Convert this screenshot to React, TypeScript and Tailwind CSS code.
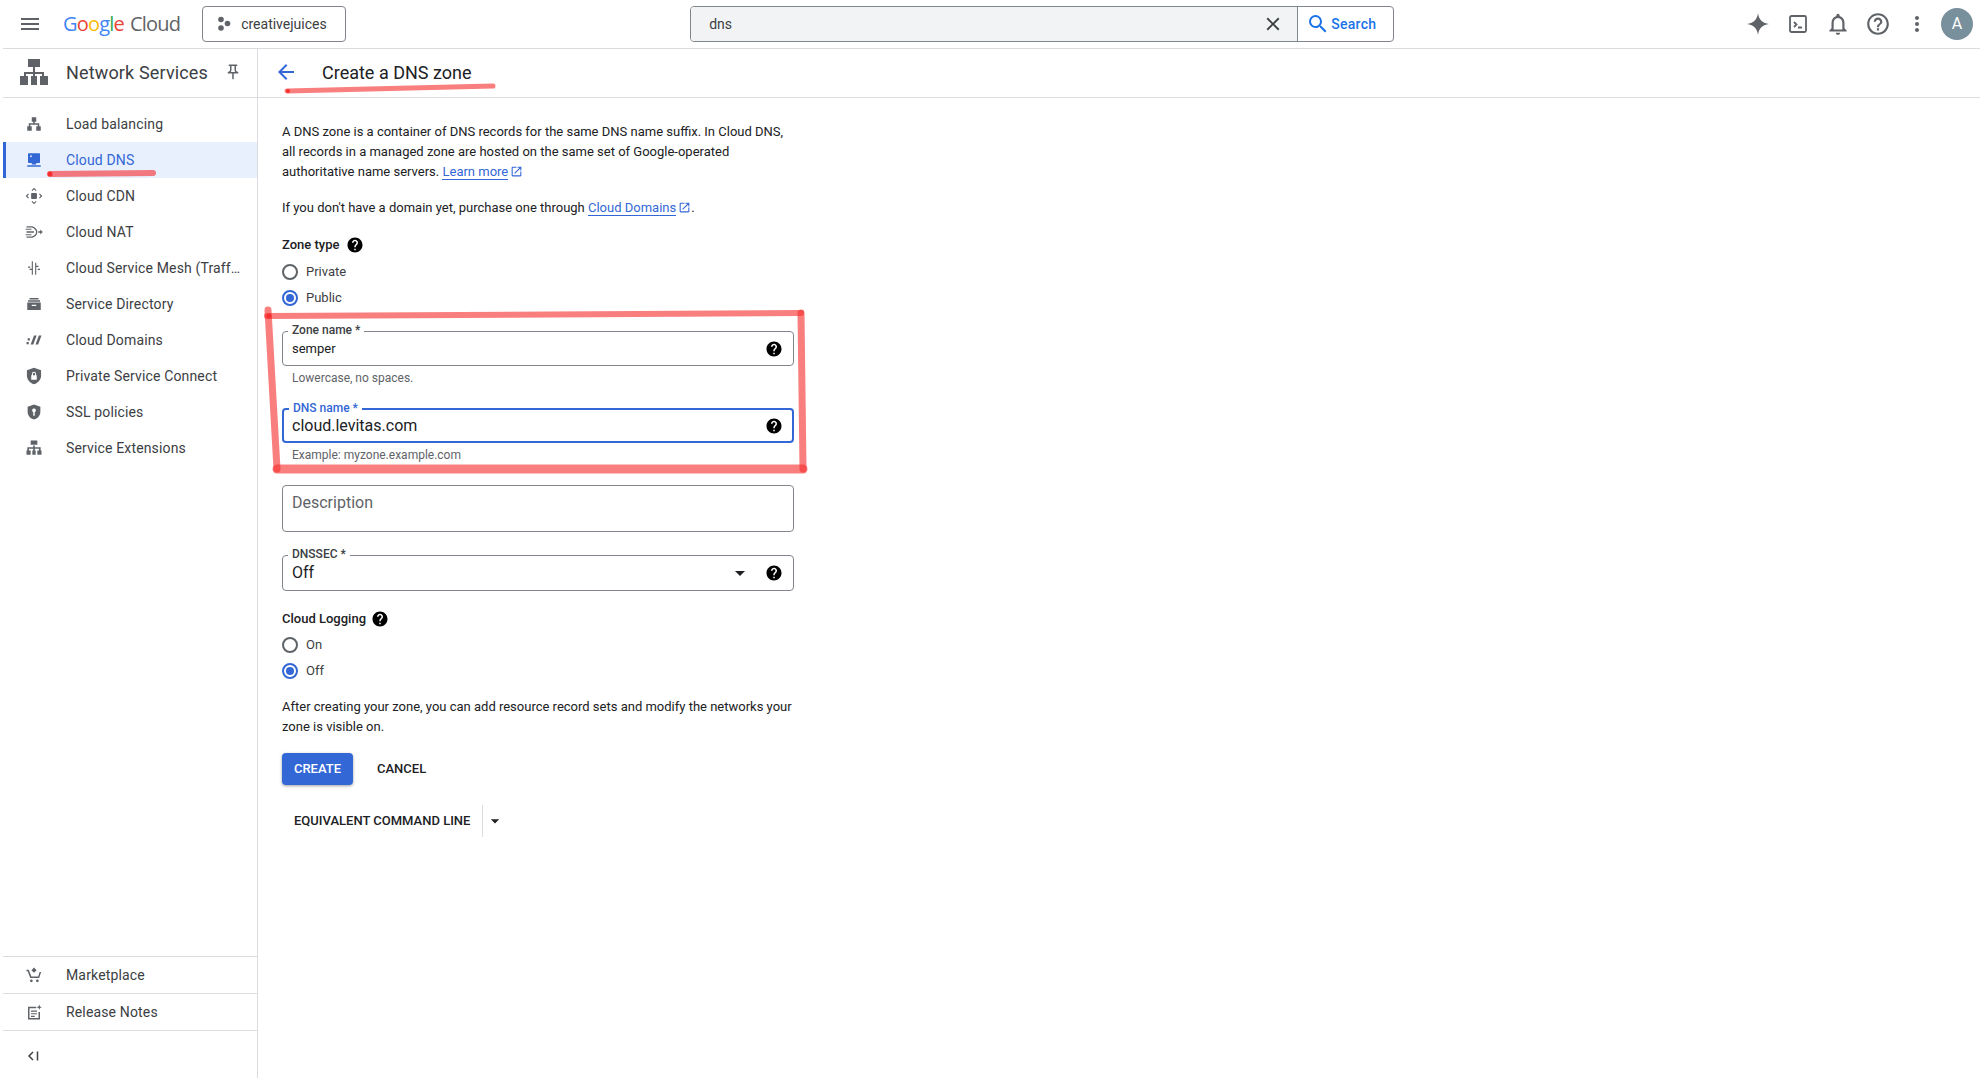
import React from "react";
import {
  MdMenu,
  MdArrowBack,
  MdHelp,
  MdClose,
  MdSearch,
  MdNotificationsNone,
  MdHelpOutline,
  MdMoreVert,
  MdOutlinePushPin,
  MdArrowDropDown,
  MdOutlineOpenInNew,
} from "react-icons/md";

const Svg = ({ children, size = 18 }: { children: React.ReactNode; size?: number }) => (
  <svg className="shrink-0" width={size} height={size} viewBox="0 0 24 24" fill="#5f6368">
    {children}
  </svg>
);

const navItems: { label: string; icon: React.ReactNode; active?: boolean }[] = [
  {
    label: "Load balancing",
    icon: (
      <Svg>
        <path d="M9 3h6v6h-2v2h6v4h2v6h-6v-6h2v-2h-10v2h2v6H3v-6h2v-4h6V9H9z" />
      </Svg>
    ),
  },
  {
    label: "Cloud DNS",
    active: true,
    icon: (
      <Svg>
        <path fill="#3367d6" d="M5 3h14a1 1 0 0 1 1 1v11a1 1 0 0 1-1 1h-4v2H9v-2H5a1 1 0 0 1-1-1V4a1 1 0 0 1 1-1zM3 19h18v2H3z" />
        <circle cx="8" cy="7" r="1.2" fill="#e8f0fe" />
      </Svg>
    ),
  },
  {
    label: "Cloud CDN",
    icon: (
      <Svg size={20}>
        <rect x="8.500" y="8.500" width="7" height="7" rx="1" />
        <path d="M9 5l3-3 3 3-1 1-2-2-2 2zM9 19l3 3 3-3-1-1-2 2-2-2zM5 9l-3 3 3 3 1-1-2-2 2-2zM19 9l3 3-3 3-1-1 2-2-2-2z" />
      </Svg>
    ),
  },
  {
    label: "Cloud NAT",
    icon: (
      <Svg size={20}>
        <path d="M3 5h7c4 1.500 6 4 6 7s-2 5.500-6 7H3v-1.500h6.500c3-1.200 5-3 5-5.500s-2-4.300-5-5.500H3zM3 11.200h9v1.600H3zM2 8h7v1.400H2zM2 14.600h7V16H2zM17 11.200h2.500V9l3 3-3 3v-2.200H17z" />
      </Svg>
    ),
  },
  {
    label: "Cloud Service Mesh (Traff…",
    icon: (
      <Svg>
        <path d="M9 3h1.500v18H9zM13.500 5H15v16h-1.500zM4 10h3v1.500H4zM6 13h3v1.500H6zM15 9h3v1.500h-3zM17 13h3v1.500h-3z" />
      </Svg>
    ),
  },
  {
    label: "Service Directory",
    icon: (
      <Svg>
        <path d="M6 4h12v2H6zM4 7h16v2H4zM3 10h18v10H3zM9 13v1.500h6V13z" />
      </Svg>
    ),
  },
  {
    label: "Cloud Domains",
    icon: (
      <Svg>
        <path d="M12 6h3.500L11 18H7.500zM18.500 6H22l-4.500 12H14zM3.500 9.500H6.500v3H3.500zM2 14.500h3v3H2z" />
      </Svg>
    ),
  },
  {
    label: "Private Service Connect",
    icon: (
      <Svg size={20}>
        <path
          fillRule="evenodd"
          d="M12 2l8.500 3v6.500c0 5-3.600 9-8.500 10.500-4.900-1.500-8.500-5.500-8.500-10.500V5zM9.500 11V9.500a2.500 2.500 0 0 1 5 0V11h.8v5.500H8.700V11zm1.200 0h2.600V9.500a1.300 1.300 0 0 0-2.600 0z"
        />
      </Svg>
    ),
  },
  {
    label: "SSL policies",
    icon: (
      <Svg>
        <path
          fillRule="evenodd"
          d="M12 2l8.500 3v6.500c0 5-3.600 9-8.500 10.500-4.900-1.500-8.500-5.500-8.500-10.500V5zM12 7.500a2.500 2.500 0 0 0-1 4.800V17h2v-4.700a2.500 2.500 0 0 0-1-4.800z"
        />
      </Svg>
    ),
  },
  {
    label: "Service Extensions",
    icon: (
      <Svg size={20}>
        <path d="M8 3h8v5H8zM11 9h2v2h7v4h1v5h-5v-5h2v-2h-5v2h1v5h-4v-5h1v-2H6v2h2v5H3v-5h1v-4h7z" />
      </Svg>
    ),
  },
];

function NavRow({ label, icon, active }: { label: string; icon: React.ReactNode; active?: boolean }) {
  return (
    <div
      className={`flex h-9 items-center text-[14px] tracking-[0.15px] ${
        active ? "border-l-[3px] border-[#3367d6] bg-[#e8f0fe] pl-[21px] text-[#3367d6]" : "pl-6 text-[#3c4043]"
      }`}
    >
      <span className="flex w-[14px] items-center justify-center">{icon}</span>
      <span className="ml-[25px] whitespace-nowrap">{label}</span>
    </div>
  );
}

function Radio({ label, checked }: { label: string; checked?: boolean }) {
  return (
    <div className="flex h-[26px] items-center text-[13px] text-[#3c4043]">
      <span
        className={`flex h-4 w-4 items-center justify-center rounded-full border-2 ${
          checked ? "border-[#3367d6]" : "border-[#5f6368]"
        }`}
      >
        {checked && <span className="h-2 w-2 rounded-full bg-[#3367d6]" />}
      </span>
      <span className="ml-2">{label}</span>
    </div>
  );
}

function FloatLabel({ text, focused }: { text: string; focused?: boolean }) {
  return (
    <span
      className={`absolute left-[5px] top-[-9px] bg-white px-[4px] text-[12px] font-medium leading-[14px] ${
        focused ? "text-[#3367d6]" : "text-[#3c4043]"
      }`}
    >
      {text}
    </span>
  );
}

function ExtLink({ text }: { text: string }) {
  return (
    <>
      <a className="border-b border-[#3367d6] text-[#3367d6]">{text}</a>
      <MdOutlineOpenInNew className="ml-[2px] inline-block align-[-2px] text-[#3367d6]" size={13} />
    </>
  );
}

export default function App() {
  return (
    <div className="relative h-[1090px] w-[1980px] overflow-hidden bg-white pl-[3px] font-['Roboto',sans-serif] text-[#202124]">
      {/* top bar */}
      <header className="flex h-[49px] items-center border-b border-[#dadce0]">
        <MdMenu className="ml-[15px] text-[#5f6368]" size={24} />
        <div className="ml-[21px] flex items-baseline font-['Open_Sans',sans-serif] text-[20px] tracking-[-0.8px]">
          <span className="text-[#4285f4]">G</span>
          <span className="text-[#ea4335]">o</span>
          <span className="text-[#fbbc04]">o</span>
          <span className="text-[#4285f4]">g</span>
          <span className="text-[#34a853]">l</span>
          <span className="text-[#ea4335]">e</span>
          <span className="ml-[6px] text-[#5f6368]">Cloud</span>
        </div>
        <div className="ml-[22px] flex h-[36px] w-[144px] items-center rounded-[4px] border border-[#80868b] pl-[13px] text-[14px] text-[#3c4043]">
          <svg width="16" height="16" viewBox="0 0 16 16" fill="#5f6368">
            <circle cx="5" cy="3.500" r="2.800" />
            <circle cx="11.500" cy="7.500" r="2.800" />
            <circle cx="5" cy="12" r="2.800" />
          </svg>
          <span className="ml-[9px]">creativejuices</span>
        </div>
        <div className="ml-[344px] flex h-[36px] w-[704px] items-center overflow-hidden rounded-[4px] border border-[#80868b]">
          <div className="flex h-full w-[606px] items-center justify-between bg-[#f1f3f4] pl-[18px] pr-[13px] text-[14px] text-[#3c4043]">
            <span>dns</span>
            <MdClose size={22} className="text-[#3c4043]" />
          </div>
          <div className="flex h-full flex-1 items-center border-l border-[#80868b] pl-[8px] text-[14px] font-medium tracking-[0.3px] text-[#1a73e8]">
            <MdSearch size={24} />
            <span className="ml-[1px]">Search</span>
          </div>
        </div>
        <div className="ml-auto flex items-center">
          <svg width="24" height="24" viewBox="0 0 24 24" fill="#5f6368">
            <path d="M12 1c.8 6.500 4 10 11 11-7 1-10.200 4.500-11 11-.8-6.500-4-10-11-11 7-1 10.200-4.500 11-11z" />
          </svg>
          <svg className="ml-[17px]" width="22" height="22" viewBox="0 0 22 22" fill="none" stroke="#5f6368" strokeWidth="1.800">
            <rect x="3" y="3" width="16" height="16" rx="1.500" />
            <path d="M7 9l2.500 2.500L7 14M11 14.500h4" />
          </svg>
          <MdNotificationsNone className="ml-[16px] text-[#5f6368]" size={26} />
          <MdHelpOutline className="ml-[14px] text-[#5f6368]" size={26} />
          <MdMoreVert className="ml-[14px] text-[#5f6368]" size={24} />
          <div className="ml-[12px] mr-[7px] flex h-8 w-8 items-center justify-center rounded-full bg-[#78909c] text-[16px] text-white">
            A
          </div>
        </div>
      </header>

      <div className="flex h-[1029px]">
        {/* left nav */}
        <aside className="flex w-[255px] shrink-0 flex-col border-r border-[#dadce0]">
          <div className="flex h-[49px] shrink-0 items-center border-b border-[#dadce0] pb-[2px] pl-[17px]">
            <svg width="28" height="26" viewBox="0 0 28 26" fill="#5f6368">
              <path d="M8 0h12v8H8zM13 8h2v5h9v4h4v9h-8v-9h2v-2h-7v2h2v9h-6v-9h2v-2H6v2h2v9H0v-9h4v-4h9z" />
            </svg>
            <span className="ml-[18px] text-[18px] tracking-[0.15px] text-[#3c4043]">Network Services</span>
            <MdOutlinePushPin className="ml-[16px] text-[#5f6368]" size={18} />
          </div>
          <nav className="pt-2">
            {navItems.map((item) => (
              <NavRow key={item.label} {...item} />
            ))}
          </nav>
          <div className="mt-auto">
            <div className="border-t border-[#dadce0]">
              <NavRow
                label="Marketplace"
                icon={
                  <Svg>
                    <path d="M12 2l3.500 3.500L12 9 8.500 5.500zM2 5h3l3.500 9h9l2-6h2l-2.600 8H7L3.500 7H2zM8.500 18a1.800 1.800 0 1 1 0 3.600 1.800 1.800 0 0 1 0-3.600zM16.500 18a1.800 1.800 0 1 1 0 3.600 1.800 1.800 0 0 1 0-3.600z" />
                  </Svg>
                }
              />
            </div>
            <div className="border-t border-[#dadce0]">
              <NavRow
                label="Release Notes"
                icon={
                  <Svg>
                    <path d="M4 5h11v2H6v13h12v-8h2v10H4zM8 10h8v1.600H8zM8 13.500h8v1.600H8zM8 17h5v1.600H8zM19 2l1 2.500 2.500 1-2.500 1-1 2.500-1-2.500-2.500-1 2.500-1z" />
                  </Svg>
                }
              />
            </div>
            <div className="flex h-[48px] items-center border-t border-[#dadce0] pl-[24px] pt-[3px] text-[#3c4043]">
              <svg width="12" height="12" viewBox="0 0 12 12" fill="none" stroke="#3c4043" strokeWidth="1.500">
                <path d="M6 2L2 6l4 4M10.500 1.500v9" />
              </svg>
            </div>
          </div>
        </aside>

        {/* main */}
        <main className="flex-1">
          <div className="flex h-[49px] items-center border-b border-[#dadce0] pb-[2px] pl-[16px]">
            <MdArrowBack className="text-[#3367d6]" size={24} />
            <h1 className="ml-[24px] text-[18px] font-normal text-[#202124]">Create a DNS zone</h1>
          </div>
          <div className="ml-[24px] w-[512px] pt-[24px] text-[13px] leading-5 text-[#202124]">
            <p className="w-[512px]">
              A DNS zone is a container of DNS records for the same DNS name suffix. In Cloud DNS, all records in a
              managed zone are hosted on the same set of Google-operated authoritative name servers.{" "}
              <ExtLink text="Learn more" />
            </p>
            <p className="mt-4">
              If you don't have a domain yet, purchase one through <ExtLink text="Cloud Domains" />.
            </p>

            <div className="mt-[17px] flex h-5 items-center font-medium">
              Zone type
              <MdHelp className="ml-[7px] text-black" size={18} />
            </div>
            <div className="mt-[4px]">
              <Radio label="Private" />
              <Radio label="Public" checked />
            </div>

            <div className="relative mt-[20px] flex h-[35px] items-center justify-between rounded-[4px] border border-[#80868b] pl-[9px] pr-[10px] text-[13px]">
              <FloatLabel text="Zone name *" />
              <span>semper</span>
              <MdHelp className="text-black" size={18} />
            </div>
            <div className="mt-[4px] pl-[10px] text-[12px] leading-4 text-[#5f6368]">Lowercase, no spaces.</div>

            <div className="relative mt-[22px] flex h-[35px] items-center justify-between rounded-[4px] border-[2.500px] border-[#3367d6] pl-[8px] pr-[9px] text-[16px]">
              <FloatLabel text="DNS name *" focused />
              <span>cloud.levitas.com</span>
              <MdHelp className="text-black" size={18} />
            </div>
            <div className="mt-[4px] pl-[10px] text-[12px] leading-4 text-[#5f6368]">Example: myzone.example.com</div>

            <div className="mt-[22px] h-[47px] rounded-[4px] border border-[#80868b] pl-[9px] pt-[7px] text-[16px] text-[#5f6368]">
              Description
            </div>

            <div className="relative mt-[23px] flex h-[36px] items-center rounded-[4px] border border-[#80868b] pl-[9px] pr-[10px] text-[16px]">
              <FloatLabel text="DNSSEC *" />
              <span>Off</span>
              <MdArrowDropDown className="ml-auto text-[#202124]" size={24} />
              <MdHelp className="ml-[13px] text-black" size={18} />
            </div>

            <div className="mt-[18px] flex h-5 items-center font-medium">
              Cloud Logging
              <MdHelp className="ml-[5px] text-black" size={18} />
            </div>
            <div className="mt-[3px]">
              <Radio label="On" />
              <Radio label="Off" checked />
            </div>

            <p className="mt-[13px]">
              After creating your zone, you can add resource record sets and modify the networks your zone is visible on.
            </p>

            <div className="mt-[16px] flex items-center text-[13px] font-medium">
              <button className="h-8 w-[71px] rounded-[4px] bg-[#3367d6] text-white shadow-[0_1px_3px_rgba(60,64,67,0.5)]">
                CREATE
              </button>
              <button className="ml-[24px] text-[#202124]">CANCEL</button>
            </div>

            <div className="mt-[20px] flex h-8 items-center pl-[12px] text-[13px] font-medium">
              <span>EQUIVALENT COMMAND LINE</span>
              <span className="ml-[12px] h-8 w-px bg-[#dadce0]" />
              <MdArrowDropDown className="ml-[2px]" size={20} />
            </div>
          </div>
        </main>
      </div>

      {/* hand drawn annotation marks */}
      <svg className="pointer-events-none absolute left-0 top-0" width="1980" height="1090" fill="none" stroke="#f52f2f" strokeOpacity="0.62" strokeLinecap="round">
        <path d="M287 91L493 86" strokeWidth="5" />
        <path d="M50 174L153 173" strokeWidth="6" />
        <path d="M267 316L801 313" strokeWidth="6" />
        <path d="M801 313L803 469" strokeWidth="7" />
        <path d="M803 469L277 469" strokeWidth="9" />
        <path d="M277 469L268 310" strokeWidth="7" />
        <circle cx="288" cy="91" r="2" fill="#f52f2f" stroke="none" />
        <circle cx="50" cy="174" r="2.500" fill="#f52f2f" stroke="none" />
        <circle cx="269" cy="316" r="2.500" fill="#f52f2f" stroke="none" />
      </svg>
    </div>
  );
}
